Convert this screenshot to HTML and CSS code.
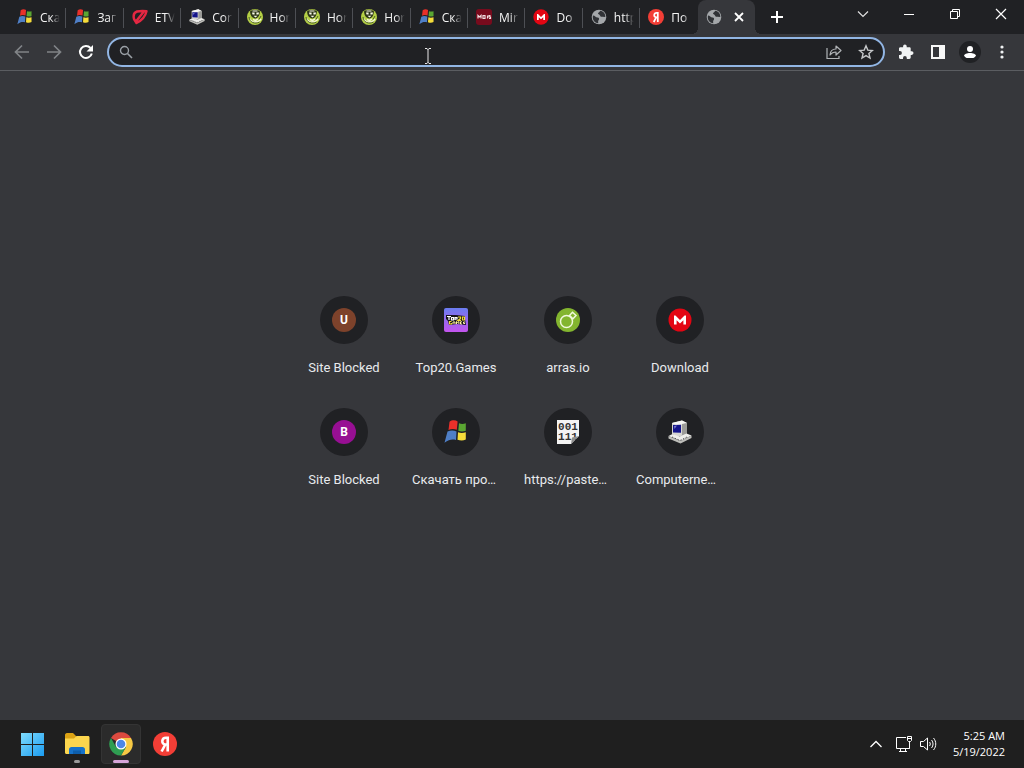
FILE: index.html
```html
<!DOCTYPE html>
<html lang="en">
<head>
<meta charset="utf-8">
<title>New Tab</title>
<link rel="stylesheet" href="styles.css">
</head>
<body>
<svg class="sprite" aria-hidden="true">
  <symbol id="flag" viewBox="0 0 24 24">
    <path fill="#e8302a" d="M5.500 1.800C8 -.2 11.500 0 13.600 1.400L12.800 9.800C10 8.500 7 8.700 4.500 10Z"/>
    <path fill="#5aa632" d="M15 3.200c2.500 1 4.600.8 6.800 0V10.800c-2.800.8-5 .8-7.500 0Z"/>
    <path fill="#4f7fc6" d="M3.500 11.600c3-1.700 6.300-1.500 9-.2L12 20c-4-1-7-.5-11.500 2.800Z"/>
    <path fill="#f5dc3a" d="M14 12.300c2.500.9 5 .9 7.800 0V19.500c-2.500 1.300-5.500 1.200-8.300.2Z"/>
  </symbol>
  <symbol id="shield" viewBox="0 0 16 16">
    <path fill="none" stroke="#e52742" stroke-width="2.400" stroke-linejoin="round" d="M2 10C1 6 2 3.500 5 2.500 8 1.800 11.500 2 14.500 2.200 13.500 7 9.500 11.500 4.500 14ZM3.500 13 11.500 3"/>
  </symbol>
  <symbol id="pc" viewBox="0 0 24 24">
    <path fill="#d6d6d2" d="M4 3 14 .5 19 3v11l-9 3-6-3Z"/>
    <path fill="#f6f6f4" d="M4 3 14 .5 19 3 9 5.500Z"/>
    <path fill="#9b9b98" d="m14 4 5-1v11l-5 2Z"/>
    <path fill="#14148a" d="M5 5 13 4.800v8L5 12.500Z"/>
    <path fill="#7676c8" d="m6 6 3-.4L6.500 9Z"/>
    <path fill="#efefec" d="m.5 16 4-2 7 2.500 7-3 5 2-11 5.500Z"/>
    <path fill="#bdbdb9" d="m.5 16 12 5 11-5.500V18l-11 5.500-12-5Z"/>
    <path stroke="#555" stroke-width="1" stroke-dasharray="1.500 1.500" d="m4 17 8 3.500 7-3.500" fill="none"/>
  </symbol>
  <symbol id="mask" viewBox="0 0 16 16">
    <circle cx="8" cy="8" r="8" fill="#b4cf45"/>
    <path fill="#2c3518" d="M3 2.500C5 .2 11 .2 13 2.500L12.500 5C12 7.500 10.500 9 8.500 9.500 5 9 3.500 7 3 2.500Z"/>
    <path fill="#fbfce9" d="M5 3.500h2.600v2H5.500Zm4.400 0H12l-.4 2H9.400ZM5.500 1.500h5v1h-5ZM6.500 6.800h4L8.500 8.500Z"/>
    <path fill="none" stroke="#f5f8d8" stroke-width="1.500" d="M2.500 9.500c2 4.500 8.500 5 11.500.3M6 10.500l2.500 1L11 10"/>
    <path fill="none" stroke="#4c6120" d="M2 8C2.500 13.500 8 15.500 12.500 13M12 10.500 14 7"/>
  </symbol>
  <symbol id="mods" viewBox="0 0 16 16">
    <rect width="16" height="16" rx="3" fill="#780b1d"/>
    <path fill="none" stroke="#f0dfe1" stroke-width="1.200" d="M2 9.500v-3l1.500 1.500L5 6.500v3M7 6.500v3h2v-3Zm4.500 0v3M14.500 6.600H13V8h1.500v1.500H13"/>
  </symbol>
  <symbol id="mega" viewBox="0 0 24 24">
    <circle cx="12" cy="12" r="11.500" fill="#e30613"/>
    <path fill="#fff" d="M6 16.500v-9h1.500L12 12l4.500-4.500H18v9h-2.600v-4.300L12 15.500l-3.400-3.300v4.300Z"/>
  </symbol>
  <symbol id="globe" viewBox="0 0 16 16">
    <circle cx="8" cy="8" r="7.300" fill="#a4a7aa"/>
    <path fill="#303236" d="M2 6.500c2 0 2.500 2 4.500 2 1.800.2 2 1.700 1 2.700-.6.800-.3 2-.2 3C3.500 14 1 10.500 2 6.500ZM9 1.800c-.2 1.500-1.700 1.500-2 2.500C7 5.500 8.500 5 9 6.500c.3 1.200 1.200 1.500 2.500 1.200l2.800.3C14.500 4.500 12 2 9 1.800Z"/>
  </symbol>
  <symbol id="yandex" viewBox="0 0 24 24">
    <circle cx="12" cy="12" r="12" fill="#f33e36"/>
    <path fill="none" stroke="#fff" stroke-width="2.600" d="M14.700 19.500V5.700H13c-4.500 0-5 6.400-.8 6.800h2.500M12.300 12.500 8.600 19.500"/>
  </symbol>
</svg>

<header class="tabstrip">
  <nav class="tabs" aria-label="Tabs">
    <button class="tab"><svg class="fav"><use href="#flag"/></svg><span class="tab-title">Ска</span></button>
    <button class="tab"><svg class="fav"><use href="#flag"/></svg><span class="tab-title">Заг</span></button>
    <button class="tab"><svg class="fav"><use href="#shield"/></svg><span class="tab-title">ETV</span></button>
    <button class="tab"><svg class="fav"><use href="#pc"/></svg><span class="tab-title">Cor</span></button>
    <button class="tab"><svg class="fav"><use href="#mask"/></svg><span class="tab-title">Hor</span></button>
    <button class="tab"><svg class="fav"><use href="#mask"/></svg><span class="tab-title">Hor</span></button>
    <button class="tab"><svg class="fav"><use href="#mask"/></svg><span class="tab-title">Hor</span></button>
    <button class="tab"><svg class="fav"><use href="#flag"/></svg><span class="tab-title">Ска</span></button>
    <button class="tab"><svg class="fav"><use href="#mods"/></svg><span class="tab-title">Mir</span></button>
    <button class="tab"><svg class="fav"><use href="#mega"/></svg><span class="tab-title">Do</span></button>
    <button class="tab"><svg class="fav"><use href="#globe"/></svg><span class="tab-title">http</span></button>
    <button class="tab"><svg class="fav"><use href="#yandex"/></svg><span class="tab-title">По</span></button>
    <div class="tab active">
      <svg class="fav"><use href="#globe"/></svg>
      <button class="tab-close" aria-label="Close tab"><svg width="10" height="10" viewBox="0 0 10 10"><path d="m1 1 8 8M9 1 1 9" stroke="#fff" stroke-width="1.800"/></svg></button>
    </div>
  </nav>
  <button class="new-tab" aria-label="New tab"><svg width="12" height="12" viewBox="0 0 12 12"><path d="M6 0v12M0 6h12" stroke="#fff" stroke-width="2"/></svg></button>
  <div class="window-controls">
    <button aria-label="Search tabs"><svg width="12" height="12" viewBox="0 0 12 12"><path d="m1 3.500 5 5 5-5" fill="none" stroke="#e0e0e0" stroke-width="1.200"/></svg></button>
    <button aria-label="Minimize"><svg width="12" height="12" viewBox="0 0 12 12"><path d="M1 6.500h10" stroke="#fff"/></svg></button>
    <button aria-label="Restore"><svg width="12" height="12" viewBox="0 0 12 12"><path d="M1.500 3.500h7v7h-7zM3.500 3.500v-2h7v7h-2" fill="none" stroke="#fff"/></svg></button>
    <button aria-label="Close"><svg width="12" height="12" viewBox="0 0 12 12"><path d="m1 1 10 10M11 1 1 11" stroke="#fff" stroke-width="1.200"/></svg></button>
  </div>
</header>

<div class="toolbar">
  <div class="nav-buttons">
    <button aria-label="Back"><svg width="16" height="16" viewBox="0 0 16 16"><path d="M15 8H2M8 1.500 1.500 8 8 14.500" fill="none" stroke="#818487" stroke-width="1.700"/></svg></button>
    <button aria-label="Forward"><svg width="16" height="16" viewBox="0 0 16 16"><path d="M1 8h13M8 1.500 14.500 8 8 14.500" fill="none" stroke="#818487" stroke-width="1.700"/></svg></button>
    <button aria-label="Reload"><svg width="16" height="16" viewBox="0 0 16 16"><path d="M13.800 9.500A6 6 0 1 1 12.500 4" fill="none" stroke="#fff" stroke-width="2"/><path fill="#fff" d="M15 1v6.500H8.500Z"/></svg></button>
  </div>
  <div class="omnibox">
    <svg class="search" width="14" height="14" viewBox="0 0 14 14"><circle cx="5.500" cy="5.500" r="4" fill="none" stroke="#9aa0a6" stroke-width="1.400"/><path d="m8.500 8.500 4.500 4.500" stroke="#9aa0a6" stroke-width="1.600"/></svg>
    <input type="text" aria-label="Address and search bar">
    <button aria-label="Share"><svg width="16" height="16" viewBox="0 0 16 16"><path d="M1 4v10.500h12V12" fill="none" stroke="#b0b3b6" stroke-width="1.200"/><path d="M4 11c.3-4 2.500-6 6-6V2l5 4.500-5 4.500V8C7.500 8 5.500 9 4 11Z" fill="none" stroke="#b0b3b6" stroke-width="1.200" stroke-linejoin="round"/></svg></button>
    <button aria-label="Bookmark"><svg width="16" height="16" viewBox="0 0 16 16"><path d="m8 1.800 1.800 4.300 4.600.4-3.500 3 1.100 4.600L8 11.600l-4 2.500 1.100-4.600-3.500-3 4.600-.4Z" fill="none" stroke="#c6c8ca" stroke-width="1.400"/></svg></button>
  </div>
  <div class="actions">
    <button aria-label="Extensions"><svg width="16" height="16" viewBox="0 0 16 16"><path fill="#f1f3f4" d="M13.700 7.300h-1V4.600c0-.8-.6-1.300-1.300-1.300H8.700v-1a1.800 1.800 0 0 0-3.600 0v1H2.400C1.600 3.300 1 3.900 1 4.600v2.500h1a1.900 1.900 0 0 1 0 3.800H1v2.700c0 .8.600 1.400 1.400 1.400H5v-1a1.900 1.900 0 0 1 3.800 0v1h2.600c.7 0 1.300-.6 1.300-1.400v-2.700h1a1.800 1.800 0 0 0 0-3.600Z"/></svg></button>
    <button aria-label="Side panel"><svg width="16" height="16" viewBox="0 0 16 16"><path fill="#f8f8f8" fill-rule="evenodd" d="M1 1h14v14H1Zm2 2v10h6V3Z"/></svg></button>
    <button class="profile" aria-label="Profile"><svg width="14" height="14" viewBox="0 0 14 14"><circle cx="7" cy="4" r="3" fill="#fff"/><path fill="#fff" d="M1 13v-2c0-4 12-4 12 0v2Z"/></svg></button>
    <button aria-label="Menu"><svg width="16" height="16" viewBox="0 0 16 16"><g fill="#f1f3f4"><circle cx="8" cy="3" r="1.600"/><circle cx="8" cy="8" r="1.600"/><circle cx="8" cy="13" r="1.600"/></g></svg></button>
  </div>
  <svg class="pointer" width="8" height="18" viewBox="0 0 8 18" aria-hidden="true"><path d="M1 1.500h2l1 1 1-1h2M4 2v14M1 16.500h2l1-1 1 1h2" fill="none" stroke="#e8e8e8"/></svg>
</div>

<main class="page">
  <div class="tiles">
    <a class="tile" href="#"><span class="disc"><span class="letter brown">U</span></span><span class="label">Site Blocked</span></a>
    <a class="tile" href="#"><span class="disc"><svg width="24" height="24" viewBox="0 0 24 24"><defs><linearGradient id="tg" x2="0" y2="1"><stop stop-color="#6a7df0"/><stop offset="1" stop-color="#c454ee"/></linearGradient></defs><rect width="24" height="24" rx="2" fill="url(#tg)"/><path d="M2 7h10l9 1v3l1 6-9-1-8 1-1-4-2-2Z" fill="#16141c"/><path d="M3 8.500h4M5 8.500V12M7.500 9.500h2V12h-2ZM11 12V9.500h2V11h-2" stroke="#fff" stroke-width="1.200" fill="none"/><path d="M14 9h2.500v1.500L14 12.300h3M18.500 9h2v3h-2ZM7.500 13.500h-2v2.500h2V15" stroke="#f4dd35" stroke-width="1.200" fill="none"/><path d="M9 16v-2h2v2M12.500 16v-2.500l1.200 1 1.200-1V16M18 13.800h-1.500V16H18M21 14h-1.500v1.500H21" stroke="#fff3a0" fill="none"/></svg></span><span class="label">Top20.Games</span></a>
    <a class="tile" href="#"><span class="disc"><svg width="24" height="24" viewBox="0 0 24 24"><circle cx="12" cy="12" r="12" fill="#83b52f"/><g fill="none" stroke="#f0f8dc" stroke-width="1.500"><circle cx="10.500" cy="13.500" r="6"/><path d="m13.500 7.500 3-3.200 3.500 3.200-3 3.200Z"/></g></svg></span><span class="label">arras.io</span></a>
    <a class="tile" href="#"><span class="disc"><svg width="24" height="24"><use href="#mega"/></svg></span><span class="label">Download</span></a>
    <a class="tile" href="#"><span class="disc"><span class="letter purple">B</span></span><span class="label">Site Blocked</span></a>
    <a class="tile" href="#"><span class="disc"><svg width="24" height="24"><use href="#flag"/></svg></span><span class="label long">Скачать про…</span></a>
    <a class="tile" href="#"><span class="disc"><span class="binary">001<br>111<svg class="fold" width="9" height="9" viewBox="0 0 9 9"><path fill="#202124" d="M9 1v8H1Z"/><path fill="#8e8e8e" d="M2 2.500 9 1 1 9Z"/></svg></span></span><span class="label long">https://paste…</span></a>
    <a class="tile" href="#"><span class="disc"><svg width="24" height="24"><use href="#pc"/></svg></span><span class="label long">Computerne…</span></a>
  </div>
</main>

<footer class="taskbar">
  <div class="apps">
    <button aria-label="Start"><svg width="24" height="24" viewBox="0 0 24 24"><defs><linearGradient id="wg" x2="1" y2="1"><stop stop-color="#7fdcfd"/><stop offset="1" stop-color="#1a9bf0"/></linearGradient></defs><path fill="url(#wg)" d="M0 1h11v11H0ZM12 1h11v11H12ZM0 13h11v11H0ZM12 13h11v11H12Z"/></svg></button>
    <button class="running" aria-label="File Explorer"><svg width="26" height="24" viewBox="0 0 26 24"><path fill="#dba214" d="M1 3c0-1 .7-2 2-2h6l3 3v4H1Z"/><path fill="#fcd64e" d="M1 6.500h9L12.500 4H24c1 0 1.500.6 1.500 1.500v15c0 1-.5 1.500-1.500 1.500H2.500c-1 0-1.500-.6-1.500-1.500Z"/><path fill="#1672c9" d="M5 22v-4.500c0-1.500 1-2.500 2.500-2.500h11c1.500 0 2.500 1 2.500 2.500V22Z"/><path fill="#0d5daa" d="M9 18.500h8V22H9Z"/></svg></button>
    <button class="running current" aria-label="Chrome"><svg width="24" height="24" viewBox="0 0 24 24"><path fill="#dc4a3f" d="M12 12 2 6a11.500 11.500 0 0 1 20 0Z"/><path fill="#f6c944" d="M12 12V6h10A11.500 11.500 0 0 1 12 23.500L17 15Z"/><path fill="#2f9e52" d="M2 6a11.500 11.500 0 0 0 10 17.500L17 15H7Z"/><circle cx="12" cy="12" r="5.500" fill="#fff"/><circle cx="12" cy="12" r="4.300" fill="#4c87e8"/></svg></button>
    <button aria-label="Yandex"><svg width="24" height="24"><use href="#yandex"/></svg></button>
  </div>
  <div class="tray">
    <button aria-label="Show hidden icons"><svg width="14" height="14" viewBox="0 0 14 14"><path d="m1.500 10 5.500-5.500L12.500 10" fill="none" stroke="#fff" stroke-width="1.300"/></svg></button>
    <button aria-label="Network"><svg width="18" height="18" viewBox="0 0 18 18"><path d="M11 2.500H1.500v11h13V9M5.500 13.500v3m5-3v3M4 16.500h8M12.500 1.500h4v4l-1 1h-2l-1-1ZM14.500 6.500v7M12.500 3.500h4" fill="none" stroke="#fff"/></svg></button>
    <button aria-label="Volume"><svg width="18" height="18" viewBox="0 0 18 18"><path d="M1.500 6.500h3l4-3.500v12l-4-3.500h-3Z" fill="none" stroke="#fff" stroke-linejoin="round"/><path d="M10.500 7c1 1.200 1 2.800 0 4M12.500 5c2 2.500 2 5.500 0 8M14.500 3c3 3.500 3 8.500 0 12" fill="none" stroke="#fff"/></svg></button>
    <div class="clock"><time>5:25 AM</time><time>5/19/2022</time></div>
  </div>
</footer>
</body>
</html>
```
FILE: styles.css
```css
* { box-sizing: border-box; }

body {
  margin: 0;
  min-height: 100vh;
  display: flex;
  flex-direction: column;
  background: #36373b;
  color: #e8eaed;
  font-family: "Open Sans", "Noto Sans", sans-serif;
  font-size: 12px;
}

.sprite { display: none; }

button {
  display: flex;
  align-items: center;
  justify-content: center;
  margin: 0;
  padding: 0;
  border: 0;
  background: none;
  color: inherit;
  font: inherit;
}

svg { display: block; flex: none; }

/* Tab strip */
.tabstrip {
  display: flex;
  height: 34px;
  padding-left: 9px;
  background: #202124;
}

.tabs {
  display: grid;
  grid-auto-flow: column;
  grid-auto-columns: minmax(0, 1fr);
  flex: 1;
  min-width: 0;
}

.tab {
  position: relative;
  min-width: 0;
  display: flex;
  align-items: center;
  justify-content: flex-start;
  gap: 7px;
  height: 34px;
  padding: 0 4px 0 8px;
}

.tab:not(.active)::after {
  content: "";
  position: absolute;
  right: 0;
  top: 8px;
  width: 1px;
  height: 20px;
  background: #4d4f54;
}

.tab:nth-last-child(2)::after { display: none; }

.fav { width: 16px; height: 16px; }

.tab-title {
  flex: 1;
  min-width: 0;
  overflow: hidden;
  white-space: nowrap;
  text-align: left;
  color: #f4f4f4;
  mask-image: linear-gradient(90deg, #000 50%, transparent 90%);
}

.tab.active {
  justify-content: space-between;
  padding: 0 8px;
  background: #36373b;
  border-radius: 8px 8px 0 0;
}

/* Flared feet where the active tab meets the toolbar */
.tab.active::before,
.tab.active::after {
  content: "";
  position: absolute;
  bottom: 0;
  width: 6px;
  height: 6px;
}

.tab.active::before {
  right: 100%;
  background: radial-gradient(circle at 0 0, transparent 6px, #36373b 6px);
}

.tab.active::after {
  left: 100%;
  background: radial-gradient(circle at 100% 0, transparent 6px, #36373b 6px);
}

.tab-close { width: 16px; height: 16px; }

.new-tab { width: 44px; height: 34px; }

.window-controls { display: flex; margin-left: 41px; height: 28px; }
.window-controls button { width: 46px; }

/* Toolbar */
.toolbar {
  position: relative;
  display: flex;
  align-items: center;
  height: 37px;
  padding: 0 6px;
  border-bottom: 1px solid #5b5d61;
}

.nav-buttons, .actions { display: flex; }
.nav-buttons button, .actions button { width: 32px; height: 28px; }

.omnibox {
  flex: 1;
  display: flex;
  align-items: center;
  height: 30px;
  margin: 0 5px;
  padding: 0 9px 0 10px;
  border: 2px solid #92b6e4;
  border-radius: 15px;
  background: #202124;
}

.omnibox input {
  flex: 1;
  min-width: 0;
  height: 24px;
  margin-left: 8px;
  padding: 0;
  border: 0;
  outline: 0;
  background: none;
  color: #e8eaed;
  font: inherit;
}

.omnibox button { width: 16px; height: 24px; margin-left: 16px; }

.profile svg {
  width: 22px;
  height: 22px;
  padding: 4px;
  border-radius: 50%;
  background: #202124;
}

.pointer { position: absolute; left: 424px; top: 13px; }

/* New tab page */
.page { flex: 1; padding-top: 209px; }

.tiles {
  display: grid;
  grid-template-columns: repeat(4, 112px);
  justify-content: center;
}

.tile {
  display: flex;
  flex-direction: column;
  align-items: center;
  height: 112px;
  padding-top: 16px;
  color: #e8eaed;
  text-decoration: none;
  font-family: Roboto, sans-serif;
  font-size: 13px;
}

.disc {
  display: grid;
  place-items: center;
  width: 48px;
  height: 48px;
  border-radius: 50%;
  background: #202124;
}

.label { margin-top: 14px; line-height: 20px; white-space: nowrap; }
.label.long { width: 88px; }

.letter {
  width: 24px;
  border-radius: 50%;
  line-height: 24px;
  text-align: center;
  font-size: 12px;
  font-weight: 700;
  color: #fff;
}

.brown { background: #7d422b; }
.purple { background: #970f93; }

.binary {
  position: relative;
  width: 22px;
  height: 24px;
  padding-top: 2px;
  background: #f4f4f4;
  color: #333;
  text-align: center;
  font: 700 11px/10px "Liberation Mono", monospace;
}

.fold { position: absolute; right: 0; bottom: 0; }

/* Taskbar */
.taskbar {
  display: flex;
  justify-content: space-between;
  height: 48px;
  padding: 0 19px 0 13px;
  background: #1f1f1f;
}

.apps { display: flex; align-items: center; gap: 4px; }

.apps button {
  position: relative;
  width: 40px;
  height: 40px;
  border-radius: 4px;
}

.running::after {
  content: "";
  position: absolute;
  left: 17px;
  bottom: 1px;
  width: 6px;
  height: 3px;
  border-radius: 2px;
  background: #9a9a9a;
}

.apps .current { background: #2b2b2b; border: 1px solid #343434; }
.current::after { left: 11px; bottom: 0; width: 16px; background: #d6a5d9; }

.tray { display: flex; align-items: center; }
.tray button { width: 24px; height: 40px; }
.tray button:first-child { width: 32px; }

.clock {
  display: flex;
  flex-direction: column;
  align-items: flex-end;
  margin-left: 13px;
  font-size: 11px;
  line-height: 16px;
  color: #fff;
}
```
